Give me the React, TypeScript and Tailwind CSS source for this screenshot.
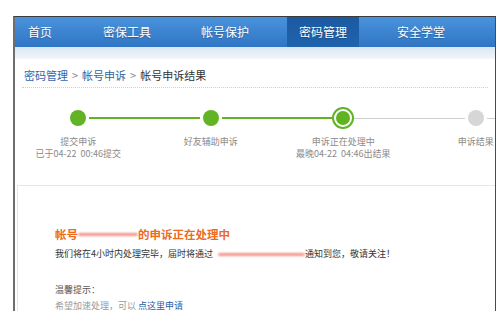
const font = { fontFamily: '"Noto Sans CJK SC", "Noto Sans", sans-serif' };

const navItems = ["首页", "密保工具", "帐号保护", "密码管理", "安全学堂"];

type Step = {
  title: string;
  sub?: string;
  left: "green" | "gray" | "none";
  right: "green" | "gray";
  state: "done" | "current" | "todo";
};

const steps: Step[] = [
  { title: "提交申诉", sub: "已于04-22  00:46提交", left: "none", right: "green", state: "done" },
  { title: "好友辅助申诉", left: "green", right: "green", state: "done" },
  { title: "申诉正在处理中", sub: "最晚04-22  04:46出结果", left: "green", right: "gray", state: "current" },
  { title: "申诉结果", left: "gray", right: "gray", state: "todo" },
];

const Line = ({ kind }: { kind: "green" | "gray" | "none" }) => {
  if (kind === "none") return <div className="flex-1" />;
  return (
    <div
      className={
        kind === "green" ? "flex-1 h-[2px] bg-[#62b225]" : "flex-1 h-px bg-[#cfcfcf]"
      }
    />
  );
};

const Dot = ({ state }: { state: Step["state"] }) => {
  if (state === "current")
    return (
      <div className="w-[22px] h-[22px] rounded-full border-2 border-[#62b225] bg-white flex items-center justify-center shrink-0">
        <div className="w-[14px] h-[14px] rounded-full bg-[#5fb31f]" />
      </div>
    );
  return (
    <div className="w-[22px] h-[22px] flex items-center justify-center shrink-0">
      <div
        className={
          state === "done"
            ? "w-[16px] h-[16px] rounded-full bg-[#63b424]"
            : "w-[16px] h-[16px] rounded-full bg-[#d6d6d6]"
        }
      />
    </div>
  );
};

const Redact = ({ w }: { w: number }) => (
  <span className="inline-flex items-center align-middle" style={{ width: w }}>
    <span className="block w-full h-[3px] rounded-full bg-[#f08a7e] blur-[1px] opacity-90" />
  </span>
);

export default function App() {
  return (
    <div className="w-[500px] h-[311px] bg-white overflow-hidden pt-[16px] pl-[13px] pr-[4px]" style={font}>
      <div className="h-full border-t border-t-[#3a3a3a] border-l-2 border-l-[#6e6e6e] border-r border-r-[#4a4a4a] overflow-hidden">
        <div className="h-[30px] bg-gradient-to-b from-[#4a93dc] to-[#2f75c4] flex items-stretch gap-[26px] text-white text-[12px]">
          {navItems.map((n, i) => (
            <div
              key={n}
              className={
                (i === 0 ? "w-[50px] " : "w-[72px] ") +
                (n === "密码管理" ? "bg-gradient-to-b from-[#1b5aa2] to-[#2063ad] " : "") +
                "flex items-center justify-center [text-shadow:0_1px_1px_rgba(0,0,0,0.25)]"
              }
            >
              {n}
            </div>
          ))}
        </div>
        <div className="h-[12px] bg-gradient-to-b from-[#d9e7f5] to-[#f2f6fb]" />

        <div className="mx-[7px] pt-[8px] pb-[4px] pl-[2px] border-b border-dotted border-[#cfcfcf] text-[11px] leading-[16px] text-[#333] flex gap-[4px]">
          <span className="text-[#2f66ad]">密码管理</span>
          <span className="text-[#888]">&gt;</span>
          <span className="text-[#34649e]">帐号申诉</span>
          <span className="text-[#888]">&gt;</span>
          <span>帐号申诉结果</span>
        </div>

        <div className="h-[97px] pt-[19px] -ml-[3px] flex">
          {steps.map((s) => (
            <div key={s.title} className="w-[132.5px] shrink-0 flex flex-col items-center">
              <div className="w-full flex items-center h-[22px]">
                <Line kind={s.left} />
                <Dot state={s.state} />
                <Line kind={s.right} />
              </div>
              <div className="mt-[7px] text-[9px] leading-[12px] text-[#8a8a8a] text-center whitespace-pre">
                <div>{s.title}</div>
                {s.sub && <div>{s.sub}</div>}
              </div>
            </div>
          ))}
        </div>

        <div className="ml-[2px] h-full border-t border-l border-[#e6e6e6] pt-[40px] pl-[37px]">
          <div className="text-[11.5px] leading-[16px] font-bold text-[#ee6a1c] flex items-center whitespace-nowrap">
            <span>帐号</span>
            <Redact w={60} />
            <span>的申诉正在处理中</span>
          </div>
          <div className="mt-[5px] text-[9px] leading-[14px] text-[#333] flex items-center whitespace-nowrap">
            <span>我们将在4小时内处理完毕，届时将通过</span>
            <span className="ml-[5px]" />
            <Redact w={87} />
            <span>通知到您，敬请关注！</span>
          </div>
          <div className="mt-[22px] text-[9px] leading-[14px] text-[#555]">温馨提示：</div>
          <div className="mt-[2px] text-[9px] leading-[14px] text-[#9a9a9a]">
            希望加速处理，可以 <span className="text-[#2a5ea8]">点这里申请</span>
          </div>
        </div>
      </div>
    </div>
  );
}
